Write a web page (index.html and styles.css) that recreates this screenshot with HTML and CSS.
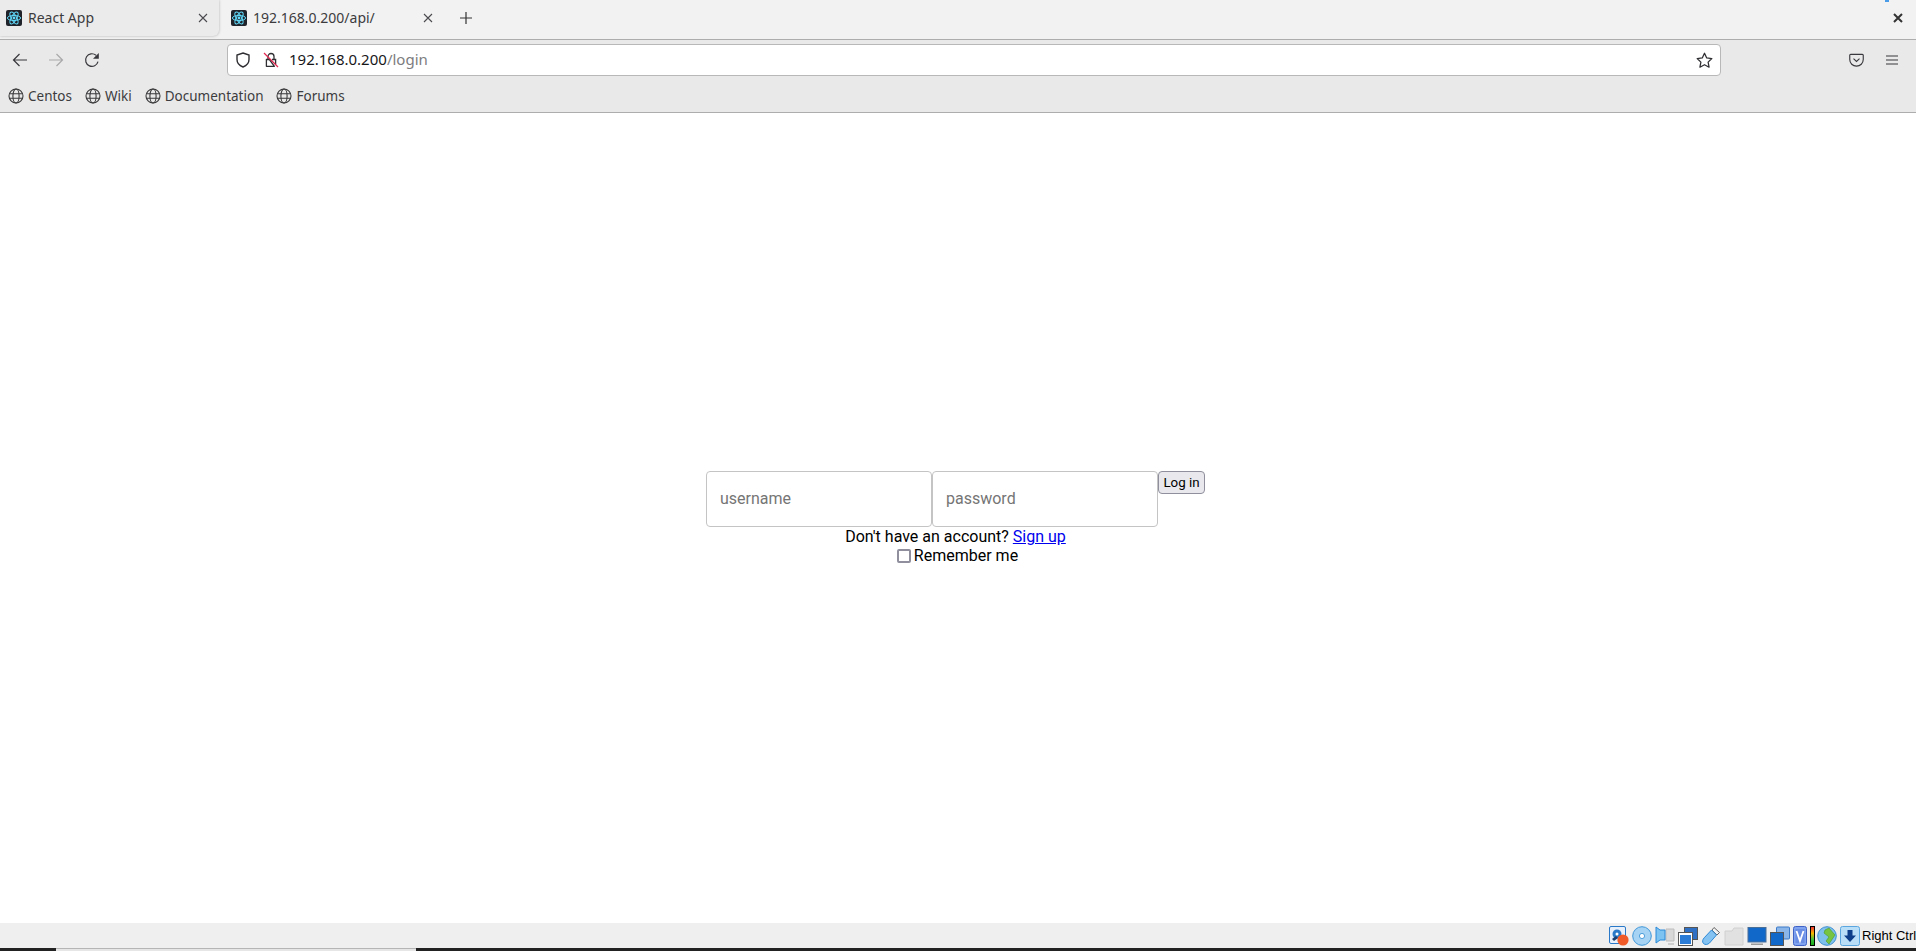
FILE: index.html
```html
<!DOCTYPE html>
<html lang="en">
<head>
<meta charset="utf-8">
<title>React App</title>
<link rel="stylesheet" href="styles.css">
</head>
<body>
<svg class="defs" width="0" height="0" aria-hidden="true">
  <symbol id="react" viewBox="0 0 16 16">
    <rect width="16" height="16" rx="2" fill="#20232a"/>
    <g fill="none" stroke="#61dafb" stroke-width="1">
      <ellipse cx="8" cy="8" rx="6.6" ry="2.6"/>
      <ellipse cx="8" cy="8" rx="6.6" ry="2.6" transform="rotate(60 8 8)"/>
      <ellipse cx="8" cy="8" rx="6.6" ry="2.6" transform="rotate(120 8 8)"/>
    </g>
    <circle cx="8" cy="8" r="1.4" fill="#61dafb"/>
  </symbol>
  <symbol id="globe" viewBox="0 0 16 16">
    <g fill="none" stroke="#3a3a3c" stroke-width="1.1">
      <circle cx="8" cy="8" r="7"/>
      <ellipse cx="8" cy="8" rx="3.1" ry="7"/>
      <path d="M1.400 5.700h13.200M1.400 10.300h13.200"/>
    </g>
  </symbol>
  <symbol id="close" viewBox="0 0 12 12">
    <path d="M2 2l8 8M10 2l-8 8" fill="none" stroke="#4a4a4f" stroke-width="1.1"/>
  </symbol>
</svg>

<header class="tabstrip">
  <div class="tab tab-active">
    <svg class="favicon"><use href="#react"/></svg>
    <span class="tab-title">React App</span>
    <svg class="tab-close"><use href="#close"/></svg>
  </div>
  <div class="tab tab-other">
    <svg class="favicon"><use href="#react"/></svg>
    <span class="tab-title">192.168.0.200/api/</span>
    <svg class="tab-close"><use href="#close"/></svg>
  </div>
  <svg class="newtab" viewBox="0 0 12 12"><path d="M6 0v12M0 6h12" fill="none" stroke="#333" stroke-width="1.2"/></svg>
  <span class="tabstrip-fill"></span>
  <svg class="winclose" viewBox="0 0 10 10"><path d="M1 1l8 8M9 1l-8 8" fill="none" stroke="#333" stroke-width="2"/></svg>
  <span class="blue-speck"></span>
</header>

<nav class="navbar">
  <svg class="nav-icon" viewBox="0 0 16 16"><path d="M15 8H1.500M7.500 2L1.500 8l6 6" fill="none" stroke="#38383d" stroke-width="1.2"/></svg>
  <svg class="nav-icon nav-forward" viewBox="0 0 16 16"><path d="M1 8h13.500M8.500 2l6 6-6 6" fill="none" stroke="#a9a9ab" stroke-width="1.2"/></svg>
  <svg class="nav-icon nav-reload" viewBox="0 0 16 16"><path d="M14 9.600A6.300 6.300 0 1 1 12 3.300" fill="none" stroke="#38383d" stroke-width="1.2"/><path d="M14.800 1v5.700H9z" fill="#38383d"/></svg>
  <div class="urlbar">
    <svg class="url-shield" viewBox="0 0 16 16"><path d="M8 1l6 2v4.500c0 3.800-2.600 6.200-6 7.500-3.400-1.300-6-3.700-6-7.500V3z" fill="none" stroke="#2f2f33" stroke-width="1.4"/></svg>
    <svg class="url-lock" viewBox="0 0 16 16">
      <path d="M5 7V4.500a3 3 0 0 1 6 0V7" fill="none" stroke="#2f2f33" stroke-width="1.3"/>
      <path d="M3.400 7.500h3l5 6.800H3.400z" fill="none" stroke="#2f2f33" stroke-width="1.3" stroke-linejoin="round"/>
      <path d="M9 7.500h3.600v5" fill="none" stroke="#2f2f33" stroke-width="1.3"/>
      <path d="M1 1l14 14" stroke="#e22850" stroke-width="1.3"/>
    </svg>
    <span class="url-text"><span class="url-host">192.168.0.200</span><span class="url-path">/login</span></span>
    <svg class="url-star" viewBox="0 0 16 16"><path d="M8 1.200l2.100 4.400 4.800.6-3.500 3.300.9 4.800L8 12l-4.300 2.300.9-4.800L1.100 6.200l4.800-.6z" fill="none" stroke="#2f2f33" stroke-width="1.2" stroke-linejoin="round"/></svg>
  </div>
  <svg class="pocket" viewBox="0 0 16 16"><path d="M1.800 1.500h12.400a1 1 0 0 1 1 1V7c0 4-3.200 7-7.200 7S.8 11 .8 7V2.500a1 1 0 0 1 1-1z" fill="none" stroke="#38383d" stroke-width="1.2"/><path d="M4.800 6L8 9l3.200-3" fill="none" stroke="#38383d" stroke-width="1.2"/></svg>
  <svg class="menu" viewBox="0 0 12 10"><path d="M0 1h12M0 5h12M0 9h12" stroke="#38383d" stroke-width="1.1"/></svg>
</nav>

<div class="bookmarks">
  <a class="bookmark"><svg class="globe"><use href="#globe"/></svg>Centos</a>
  <a class="bookmark"><svg class="globe"><use href="#globe"/></svg>Wiki</a>
  <a class="bookmark"><svg class="globe"><use href="#globe"/></svg>Documentation</a>
  <a class="bookmark"><svg class="globe"><use href="#globe"/></svg>Forums</a>
</div>

<main class="page">
  <div class="login">
    <form class="login-row">
      <input class="field" type="text" placeholder="username">
      <input class="field" type="password" placeholder="password">
      <button class="submit" type="button">Log in</button>
    </form>
    <div class="login-line">Don't have an account? <a class="signup" href="#">Sign up</a></div>
    <label class="login-line remember"><input class="check" type="checkbox">Remember me</label>
  </div>
</main>

<footer class="statusbar">
  <svg class="st" viewBox="0 0 20 20"><rect x="0.500" y="0.500" width="16" height="17" rx="1.500" fill="#e8f1fb" stroke="#2a78c8"/><circle cx="8" cy="8" r="4.500" fill="#2a78c8"/><circle cx="8" cy="8" r="1.500" fill="#fff"/><path d="M3 13l4-3 2 2-4 3z" fill="#1b3f70"/><circle cx="14" cy="14" r="5.600" fill="#ef5a28"/></svg>
  <svg class="st" viewBox="0 0 20 20"><circle cx="10" cy="10" r="9.300" fill="#a6d3f3" stroke="#3f97da"/><circle cx="10" cy="10" r="2.600" fill="#fff" stroke="#4e9fdc"/></svg>
  <svg class="st" viewBox="0 0 20 20"><path d="M11 3h8v12h-8z" fill="#d8d8d8" stroke="#bdbdbd"/><path d="M13 17h6v2h-6z" fill="#cfcfcf"/><path d="M1 1l4 3h5v10H5l-4 3z" fill="#7cc3f1" stroke="#2a8ad8"/></svg>
  <svg class="st" viewBox="0 0 20 20"><rect x="6.500" y="1.500" width="13" height="12" fill="#2f6fc4" stroke="#555"/><rect x="0.500" y="6.500" width="14" height="13" fill="#fff" stroke="#555"/><rect x="2" y="9" width="11" height="9" fill="#2a7bd6"/></svg>
  <svg class="st" viewBox="0 0 20 20"><path d="M13 1.500l5.500 5-2.500 2.500-5-5z" fill="#f2f2f2" stroke="#666"/><path d="M10.500 4l5 5-7 8c-2 1.800-4.500 2-6 .5s-1-4 .7-5.700z" fill="#84c2f2" stroke="#2d8ad6"/></svg>
  <svg class="st" viewBox="0 0 20 20"><path d="M1 5h7l2-3h9v17H1z" fill="#e1e1e1" stroke="#d0d0d0"/></svg>
  <svg class="st" viewBox="0 0 20 20"><rect x="1" y="1.500" width="18" height="14.500" fill="#1268c8" stroke="#4a6f97"/><path d="M4 17.500h12v1.500H4z" fill="#9a9a9a"/></svg>
  <svg class="st" viewBox="0 0 20 20"><rect x="6.500" y="1" width="13" height="12" rx="1" fill="#8ab6ea" stroke="#3a78c9"/><rect x="0.500" y="6.500" width="13" height="13" fill="#1268c8" stroke="#555"/></svg>
  <svg class="st st-chip" viewBox="0 0 14 20"><rect x="0.500" y="0.500" width="13" height="19" rx="2" fill="#7fa3ee" stroke="#3e62c6"/><path d="M2.500 3h9v14h-9z" fill="#6a8de4"/><path d="M3.500 5l3.500 10 3.500-10" fill="none" stroke="#fff" stroke-width="1.800"/></svg>
  <span class="meter"></span>
  <svg class="st" viewBox="0 0 20 20"><circle cx="10" cy="10" r="9.300" fill="#7dc0ee" stroke="#3c8fd0"/><path d="M8 4l4-2 6 7-6 9-3-3 3-4-5-4z" fill="#76c442" stroke="#4b9a27" stroke-width="0.600"/></svg>
  <svg class="st" viewBox="0 0 20 20"><rect x="0.500" y="0.500" width="19" height="19" rx="2" fill="#b9def8" stroke="#5aa6e0"/><path d="M7.500 4h5v5.500H16L10 16 4 9.500h3.500z" fill="#0d3f8a"/></svg>
  <span class="hostkey">Right Ctrl</span>
</footer>
<div class="taskbar"><span class="taskbar-win"></span></div>
</body>
</html>
```
FILE: styles.css
```css
* { box-sizing: border-box; }
html, body { height: 100%; }
body {
  margin: 0;
  height: 951px;
  overflow: hidden;
  display: flex;
  flex-direction: column;
  background: #fff;
  font-family: Roboto, sans-serif;
  font-size: 16px;
  color: #000;
}
.defs { position: absolute; }

/* tabs */
.tabstrip {
  position: relative;
  height: 40px;
  flex: none;
  display: flex;
  align-items: flex-start;
  background: #f2f2f2;
  border-bottom: 1px solid #adadad;
  font-family: "Noto Sans", sans-serif;
  font-size: 14px;
  color: #3c3c3e;
}
.tab {
  height: 36px;
  display: flex;
  align-items: center;
  padding-left: 6px;
}
.tab-active {
  width: 219px;
  background: #ebebeb;
  border-radius: 0 0 6px 0;
  box-shadow: 0 0 3px rgba(0,0,0,.28);
}
.tab-other { width: 222px; margin-left: 6px; }
.favicon { width: 16px; height: 16px; flex: none; }
.tab-title { margin: 0 0 2px 6px; flex: 1; }
.tab-close { width: 12px; height: 12px; margin-right: 10px; flex: none; }
.tab-other .tab-close { margin-right: 13px; }
.newtab { width: 12px; height: 12px; margin: 12px 0 0 13px; flex: none; }
.tabstrip-fill { flex: 1; }
.winclose { width: 10px; height: 10px; margin: 13px 13px 0 0; flex: none; }
.blue-speck {
  position: absolute;
  top: 0;
  left: 1885px;
  width: 4px;
  height: 2px;
  background: #4a9be8;
}

/* toolbar */
.navbar {
  height: 40px;
  flex: none;
  display: flex;
  align-items: center;
  background: #e9e9e9;
  padding-left: 12px;
}
.nav-icon { width: 16px; height: 16px; flex: none; }
.nav-forward { margin-left: 20px; }
.nav-reload { margin-left: 20px; }
.urlbar {
  width: 1494px;
  height: 32px;
  margin-left: 127px;
  flex: none;
  display: flex;
  align-items: center;
  background: #fff;
  border: 1px solid #b8b8b8;
  border-radius: 4px;
  padding-left: 7px;
  font-family: "Noto Sans", sans-serif;
  font-size: 15px;
}
.url-shield { width: 16px; height: 16px; flex: none; }
.url-lock { width: 16px; height: 16px; margin-left: 12px; flex: none; }
.url-text { margin: 0 0 2px 10px; flex: 1; }
.url-host { color: #17171a; }
.url-path { color: #7d7d80; }
.url-star { width: 17px; height: 17px; margin-right: 7px; flex: none; }
.pocket { width: 15px; height: 15px; margin-left: 128px; flex: none; }
.menu { width: 12px; height: 10px; margin-left: 22px; flex: none; }

/* bookmarks */
.bookmarks {
  height: 33px;
  flex: none;
  display: flex;
  align-items: center;
  gap: 13px;
  background: #e9e9e9;
  border-bottom: 1px solid #adadad;
  padding: 0 0 1px 8px;
  font-family: "Noto Sans", sans-serif;
  font-size: 13.5px;
  color: #3c3c3e;
}
.bookmark { display: flex; align-items: center; gap: 4px; }
.globe { width: 16px; height: 16px; flex: none; }

/* login */
.page {
  flex: 1;
  display: flex;
  align-items: center;
  justify-content: center;
  padding-right: 5px;
}
.login { display: flex; flex-direction: column; align-items: center; }
.login-row { display: flex; align-items: flex-start; }
.field {
  width: 226px;
  height: 56px;
  margin: 0;
  padding: 0 13px 2px;
  border: 1px solid #c4c4c4;
  border-radius: 4px;
  font-family: Roboto, sans-serif;
  font-size: 16px;
  outline: none;
}
.field::placeholder { color: #757575; opacity: 1; }
.submit {
  width: 47px;
  height: 23px;
  padding: 0;
  background: #e9e9ed;
  border: 1px solid #8f8f9d;
  border-radius: 4px;
  font-family: Roboto, sans-serif;
  font-size: 13.333px;
  color: #000;
}
.login-line { line-height: 19px; }
.remember { display: flex; align-items: center; }
.check {
  appearance: none;
  width: 14px;
  height: 14px;
  margin: 0 3px 0 4px;
  border: 2px solid #8f8f9d;
  border-radius: 2px;
  background: #fff;
}
.signup { color: #0000ee; text-decoration: underline; }

/* VM status bar */
.statusbar {
  height: 25px;
  flex: none;
  display: flex;
  align-items: center;
  gap: 3px;
  background: #efefef;
  padding-left: 1609px;
  overflow: hidden;
  white-space: nowrap;
}
.st { width: 20px; height: 20px; flex: none; }
.st-chip { width: 14px; }
.meter {
  width: 5px;
  height: 20px;
  margin-right: -1px;
  flex: none;
  border: 1px solid #000;
  background: linear-gradient(#e33 0, #f7b500 35%, #3cc13c 70%, #17a917 100%);
}
.hostkey {
  margin-left: -1px;
  font-family: "Liberation Sans", sans-serif;
  font-size: 13px;
  color: #000;
}
.taskbar {
  height: 3px;
  flex: none;
  background: #222;
  padding-left: 56px;
}
.taskbar-win {
  display: block;
  width: 360px;
  height: 3px;
  background: #e6e6e6;
  border-top: 1px solid #b5b5b5;
}
```
